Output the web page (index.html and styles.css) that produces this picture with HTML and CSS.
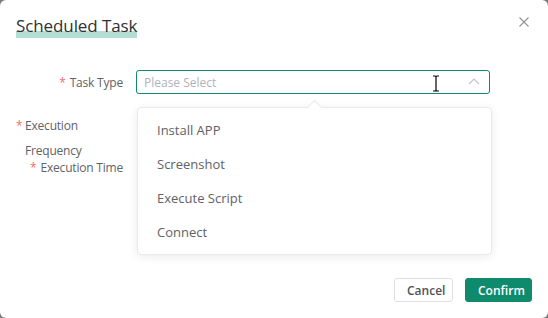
FILE: index.html
```html
<!DOCTYPE html>
<html>
<head>
<meta charset="utf-8">
<link rel="stylesheet" href="styles.css">
</head>
<body>
<div class="modal">
  <div class="header">
    <span class="title">Scheduled Task</span>
    <svg class="close" width="10" height="10" viewBox="0 0 10 10"><path d="M0.5 0.5 L9.5 9.5 M9.5 0.5 L0.5 9.5" stroke="#909399" stroke-width="1.1" fill="none"/></svg>
  </div>
  <div class="body">
    <div class="row row1">
      <div class="label"><span class="req">*</span><span class="ltext">Task Type</span></div>
      <div class="control">
        <div class="select">
          <span class="placeholder">Please Select</span>
          <svg class="chev" width="12" height="7" viewBox="0 0 12 7"><path d="M1 6 L6 1 L11 6" stroke="#c0c4cc" stroke-width="1.2" fill="none"/></svg>
          <svg class="cursor" width="8" height="17" viewBox="0 0 8 17"><path d="M1 1 H3 Q4 1 4 2 V15 Q4 16 3 16 H1 M7 1 H5 Q4 1 4 2 M4 15 Q4 16 5 16 H7" stroke="#000" stroke-width="1.2" fill="none"/></svg>
        </div>
        <div class="dropdown">
          <div class="item">Install APP</div>
          <div class="item">Screenshot</div>
          <div class="item">Execute Script</div>
          <div class="item">Connect</div>
        </div>
      </div>
    </div>
    <div class="row row2">
      <div class="label"><span class="ltext wrap"><span class="req hang">*</span>Execution Frequency</span></div>
      <div class="control"></div>
    </div>
    <div class="row row3">
      <div class="label"><span class="req">*</span><span class="ltext">Execution Time</span></div>
      <div class="control"></div>
    </div>
  </div>
  <div class="footer">
    <button class="btn cancel">Cancel</button>
    <button class="btn confirm">Confirm</button>
  </div>
</div>
</body>
</html>
```
FILE: styles.css
```css
html, body {
  margin: 0;
  padding: 0;
  background: #7b7b7b;
}
body {
  width: 548px;
  height: 318px;
  overflow: hidden;
  font-family: "Open Sans", "Noto Sans", sans-serif;
}
.modal {
  width: 548px;
  height: 318px;
  background: #fff;
  border-radius: 6px;
  display: flex;
  flex-direction: column;
  position: relative;
}
.header {
  display: flex;
  justify-content: space-between;
  align-items: flex-start;
  padding: 14px 19px 0 16px;
  height: 56px;
  box-sizing: border-box;
}
.title {
  font-size: 17px;
  line-height: 24px;
  color: #303133;
  background: linear-gradient(to bottom, transparent 17px, #b4ded3 17px, #b4ded3 24px, transparent 24px);
  letter-spacing: -0.1px;
}
.close {
  margin-top: 3px;
}
.body {
  flex: 1;
  padding-top: 14px;
}
.row {
  display: flex;
  height: 24px;
}
.row1 { margin-bottom: 19px; }
.row2 { margin-bottom: 18px; }
.label {
  width: 123px;
  flex: none;
  text-align: right;
  font-size: 12px;
  line-height: 25px;
  color: #606266;
  box-sizing: border-box;
  white-space: nowrap;
  letter-spacing: -0.2px;
}
.row2 .label {
  padding-left: 25px;
  text-align: left;
  white-space: normal;
}
.ltext.wrap {
  display: inline-block;
  position: relative;
  width: 80px;
}
.req {
  color: #f56c6c;
  margin-right: 4px;
}
.req.hang {
  position: absolute;
  left: -9px;
  top: 0;
}
.control {
  position: relative;
  width: 354px;
  margin-left: 13px;
}
.select {
  height: 24px;
  box-sizing: border-box;
  border: 1px solid #118a6d;
  border-radius: 3px;
  display: flex;
  align-items: center;
  padding: 0 9px 0 7px;
  position: relative;
}
.placeholder {
  flex: 1;
  font-size: 12px;
  color: #b0b3b9;
}
.chev {
  margin-top: -1px;
}
.cursor {
  position: absolute;
  left: 295px;
  top: 4px;
}
.dropdown {
  position: absolute;
  left: 1px;
  top: 37px;
  width: 355px;
  background: #fff;
  border: 1px solid #e8e9ec;
  border-radius: 4px;
  box-shadow: 0 2px 10px rgba(0,0,0,0.08);
  padding: 5px 0;
  box-sizing: border-box;
  z-index: 5;
}
.dropdown::before {
  content: "";
  position: absolute;
  left: 171px;
  top: -6px;
  width: 10px;
  height: 10px;
  background: #fff;
  border-left: 1px solid #e8e9ec;
  border-top: 1px solid #e8e9ec;
  transform: rotate(45deg);
}
.item {
  height: 34px;
  line-height: 34px;
  padding-left: 19px;
  font-size: 13px;
  color: #606266;
  position: relative;
}
.footer {
  display: flex;
  justify-content: flex-end;
  gap: 12px;
  padding: 0 16px 16px 0;
}
.btn {
  height: 24px;
  box-sizing: border-box;
  border-radius: 3px;
  font-family: "Open Sans", "Noto Sans", sans-serif;
  font-size: 12px;
  font-weight: 600;
  padding: 0 12px;
  cursor: pointer;
}
.cancel {
  width: 59px;
  background: #fff;
  border: 1px solid #dcdfe6;
  color: #505256;
}
.confirm {
  width: 67px;
  background: #0f8a6c;
  border: 1px solid #0f8a6c;
  color: #fff;
}
```
